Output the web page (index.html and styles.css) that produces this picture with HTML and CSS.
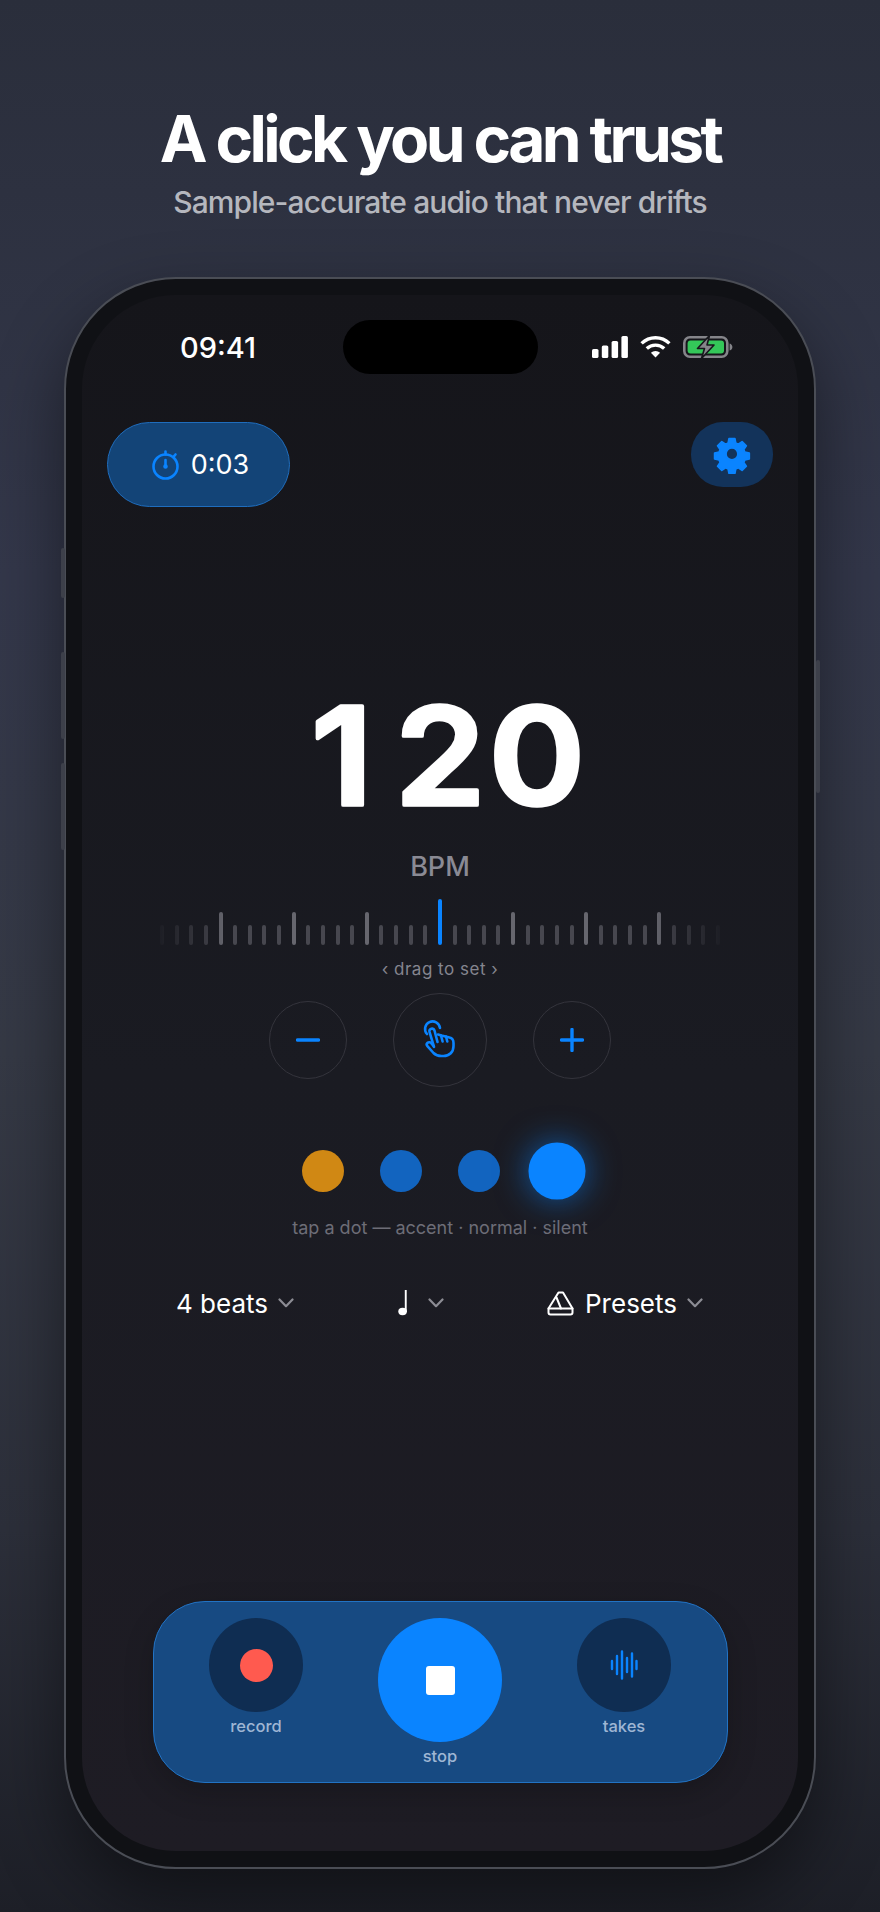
FILE: index.html
```html
<!DOCTYPE html>
<html lang="en">
  <head>
    <meta charset="utf-8" />
    <meta name="viewport" content="width=device-width, initial-scale=1.0" />
    <title>A click you can trust</title>
    <link rel="stylesheet" href="styles.css">
  </head>

  <body>
    <header class="hero">
      <h1>A click you can trust</h1>
      <p>Sample-accurate audio that never drifts</p>
    </header>

    <div class="phone">
      <span class="side side-mute"></span>
      <span class="side side-up"></span>
      <span class="side side-down"></span>
      <span class="side side-power"></span>

      <main class="screen">
        <div class="status">
          <span class="time">09:41</span>
          <span class="island"></span>
          <div class="status-icons">
            <svg width="36" height="22" viewBox="0 0 36 22" fill="#fff">
              <rect x="0" y="13" width="6.5" height="9" rx="1.6" />
              <rect x="9.8" y="9.5" width="6.5" height="12.5" rx="1.6" />
              <rect x="19.6" y="5" width="6.5" height="17" rx="1.6" />
              <rect x="29.4" y="0" width="6.5" height="22" rx="1.6" />
            </svg>
            <svg width="31" height="22" viewBox="0 0 31 22" fill="none" stroke="#fff" stroke-width="3.4">
              <path d="M1.6 7.4a20 20 0 0 1 27.8 0" />
              <path d="M6.8 12.6a12.6 12.6 0 0 1 17.4 0" />
              <path d="M15.5 21.6l-4.6-4.8a6.6 6.6 0 0 1 9.2 0z" fill="#fff" stroke="none" />
            </svg>
            <svg width="50" height="24" viewBox="0 0 50 24">
              <rect x="1.3" y="2.3" width="43" height="19.4" rx="5.6" fill="none" stroke="#85858a" stroke-width="2.6" />
              <rect x="4.6" y="5.4" width="36.4" height="13.2" rx="3" fill="#34c759" />
              <path d="M46.6 8.4c1.8.5 2.8 2 2.8 3.6s-1 3.100-2.800 3.600z" fill="#85858a" />
              <path d="M26.500 0.500 L14.500 13.500 H21.500 L18.500 23.500 L31 10 H24z" fill="#85858a" stroke="#17171c" stroke-width="1.600" stroke-linejoin="round" />
            </svg>
          </div>
        </div>

        <div class="top-bar">
          <div class="timer">
            <svg width="28" height="30" viewBox="0 0 28 30" fill="none" stroke="#0a84ff" stroke-width="2.600" stroke-linecap="round">
              <circle cx="13.500" cy="16.500" r="12" />
              <path d="M13.500 1.500v3M23.500 4.500l-1.600 1.800" />
              <path d="M13.500 10v6.500" />
              <circle cx="13.500" cy="16.500" r="1" fill="#0a84ff" />
            </svg>
            <span>0:03</span>
          </div>
          <div class="settings">
            <svg width="38" height="38" viewBox="0 0 38 38" fill="#0a84ff" stroke="#0a84ff" stroke-width="2" stroke-linejoin="round">
              <path fill-rule="evenodd" d="M15.500 1h7l1 5.200 3 1.300 4.400-3 5 5-3 4.400 1.300 3 5.200 1v7l-5.200 1-1.300 3 3 4.400-5 5-4.400-3-3 1.300-1 5.200h-7l-1-5.200-3-1.300-4.400 3-5-5 3-4.400-1.300-3-5.200-1v-7l5.200-1 1.300-3-3-4.400 5-5 4.400 3 3-1.300zM19 12a7 7 0 1 0 0 14 7 7 0 0 0 0-14z" transform="translate(2.800 1.800) scale(.85)" />
            </svg>
          </div>
        </div>

        <svg class="tempo" width="400" height="200" viewBox="0 0 400 200">
          <text transform="scale(1 .93)" x="218" y="176.900" dx="-10 22 3" text-anchor="middle">120</text>
        </svg>
        <div class="tempo-unit">BPM</div>

        <div class="ruler">
          <i class="tick"></i><i class="tick"></i><i class="tick"></i><i class="tick"></i><i class="tick tick-major"></i>
          <i class="tick"></i><i class="tick"></i><i class="tick"></i><i class="tick"></i><i class="tick tick-major"></i>
          <i class="tick"></i><i class="tick"></i><i class="tick"></i><i class="tick"></i><i class="tick tick-major"></i>
          <i class="tick"></i><i class="tick"></i><i class="tick"></i><i class="tick"></i><i class="tick tick-now"></i>
          <i class="tick"></i><i class="tick"></i><i class="tick"></i><i class="tick"></i><i class="tick tick-major"></i>
          <i class="tick"></i><i class="tick"></i><i class="tick"></i><i class="tick"></i><i class="tick tick-major"></i>
          <i class="tick"></i><i class="tick"></i><i class="tick"></i><i class="tick"></i><i class="tick tick-major"></i>
          <i class="tick"></i><i class="tick"></i><i class="tick"></i><i class="tick"></i>
        </div>
        <div class="hint">‹ drag to set ›</div>

        <div class="nudge">
          <button class="round">
            <svg width="24" height="24" viewBox="0 0 24 24" fill="none" stroke="#0a84ff" stroke-width="3.400" stroke-linecap="round"><path d="M1.500 12h21" /></svg>
          </button>
          <button class="round round-big">
            <svg width="50" height="50" viewBox="0 0 50 50" fill="none" stroke="#0a84ff" stroke-width="2.600" stroke-linecap="round" stroke-linejoin="round">
              <g transform="translate(1.500 0)">
                <path d="M10.500 19a7.500 7.500 0 1 1 13-6" />
                <path d="M21 27l-3-11.500a2.600 2.600 0 0 0-5 1.400l4.500 15" />
                <path d="M17 31l-2.500-3a2.400 2.400 0 0 0-3.600 3.200l6.100 6.800q3 3 8 3h2c6 0 10-4 10-10v-3c0-3-1.500-5-4-5.500l-8-2-3.500-1" />
                <path d="M24.500 20.500l1.600 6M29.500 21.500l1.300 5" />
              </g>
            </svg>
          </button>
          <button class="round">
            <svg width="24" height="24" viewBox="0 0 24 24" fill="none" stroke="#0a84ff" stroke-width="3.400" stroke-linecap="round"><path d="M1.500 12h21M12 1.500v21" /></svg>
          </button>
        </div>

        <div class="beats">
          <span class="dot dot-accent"></span>
          <span class="dot"></span>
          <span class="dot"></span>
          <span class="dot dot-active"></span>
        </div>
        <div class="beats-hint">tap a dot — accent · normal · silent</div>

        <div class="options">
          <div class="option">
            <span>4 beats</span>
            <svg class="chev" width="16" height="10" viewBox="0 0 16 10" fill="none" stroke="#8c8c94" stroke-width="2.200" stroke-linecap="round" stroke-linejoin="round"><path d="M1.500 1.500L8 8.200l6.500-6.700" /></svg>
          </div>
          <div class="option option-note">
            <svg width="10" height="26" viewBox="0 0 10 26" fill="#fff">
              <rect x="6.800" y="0" width="1.900" height="22" />
              <ellipse cx="4.600" cy="21.500" rx="4.300" ry="3.700" />
            </svg>
            <svg class="chev" width="16" height="10" viewBox="0 0 16 10" fill="none" stroke="#8c8c94" stroke-width="2.200" stroke-linecap="round" stroke-linejoin="round"><path d="M1.500 1.500L8 8.200l6.500-6.700" /></svg>
          </div>
          <div class="option">
            <svg width="28" height="25" viewBox="0 0 28 25" fill="none" stroke="#fff" stroke-width="2" stroke-linecap="round" stroke-linejoin="round">
              <path d="M11.500 1.500h4.500L25.500 17.500v4q0 2-2 2H3.500q-2 0-2-2v-4z" />
              <path d="M1.500 17.500h24" />
              <path d="M14 17.500L9.500 6.500" />
            </svg>
            <span>Presets</span>
            <svg class="chev" width="16" height="10" viewBox="0 0 16 10" fill="none" stroke="#8c8c94" stroke-width="2.200" stroke-linecap="round" stroke-linejoin="round"><path d="M1.500 1.500L8 8.200l6.500-6.700" /></svg>
          </div>
        </div>

        <div class="dock">
          <div class="dock-item">
            <div class="dock-btn"><span class="rec-dot"></span></div>
            <span class="dock-label">record</span>
          </div>
          <div class="dock-item">
            <div class="dock-btn dock-btn-main"><span class="stop-square"></span></div>
            <span class="dock-label">stop</span>
          </div>
          <div class="dock-item">
            <div class="dock-btn">
              <svg width="28" height="30" viewBox="0 0 28 30" fill="none" stroke="#0a84ff" stroke-width="2.400" stroke-linecap="round">
                <path d="M2 11v8M7 6v18M12 1.500v27M17 8v14M22 3.500v23M26.500 11v8" />
              </svg>
            </div>
            <span class="dock-label">takes</span>
          </div>
        </div>
      </main>
    </div>
  </body>
</html>
```

FILE: styles.css
```css
html,
body {
  margin: 0;
  height: 1912px;
}
body {
  display: flex;
  flex-direction: column;
  align-items: center;
  overflow: hidden;
  background: linear-gradient(180deg, #2a2e3b 0%, #33374a 30%, #353945 55%, #2c2f3a 80%, #1d1f27 100%);
  color: #fff;
  font-family: Inter, "Noto Sans", sans-serif;
}
button {
  padding: 0;
  background: none;
  font: inherit;
}

.hero {
  padding-top: 103px;
  text-align: center;
}
.hero h1 {
  margin: 0;
  font-size: 64px;
  line-height: 72px;
  font-weight: 700;
  letter-spacing: -0.056em;
}
.hero p {
  margin: 9px 0 0;
  font-size: 30px;
  line-height: 36px;
  font-weight: 500;
  letter-spacing: -0.03em;
  color: #b5b7be;
}

.phone {
  position: relative;
  box-sizing: border-box;
  flex: none;
  width: 752px;
  height: 1592px;
  margin-top: 57px;
  padding: 16px;
  background: #101115;
  border: 2px solid #4a4d55;
  border-radius: 112px;
  box-shadow: 0 30px 70px rgba(0, 0, 0, 0.45);
}
.side {
  position: absolute;
  width: 4px;
  background: #3d404a;
  border-radius: 2px;
}
.side-mute {
  left: -5px;
  top: 269px;
  height: 50px;
}
.side-up {
  left: -5px;
  top: 373px;
  height: 87px;
}
.side-down {
  left: -5px;
  top: 484px;
  height: 87px;
}
.side-power {
  right: -6px;
  top: 381px;
  height: 133px;
}

.screen {
  display: flex;
  flex-direction: column;
  align-items: center;
  height: 100%;
  background: linear-gradient(180deg, #15151a 0%, #1a1b22 50%, #1e1c24 100%);
  border-radius: 94px;
}

.status {
  display: grid;
  grid-template-columns: 1fr 195px 1fr;
  align-items: center;
  align-self: stretch;
  height: 54px;
  margin-top: 25px;
}
.time {
  padding-left: 98px;
  font-size: 29px;
  font-weight: 500;
}
.island {
  height: 54px;
  background: #000;
  border-radius: 27px;
}
.status-icons {
  display: flex;
  align-items: center;
  justify-content: flex-end;
  gap: 12px;
  padding-right: 65px;
}

.top-bar {
  display: flex;
  align-items: flex-start;
  justify-content: space-between;
  align-self: stretch;
  margin-top: 48px;
  padding: 0 25px;
}
.timer {
  box-sizing: border-box;
  display: flex;
  align-items: center;
  justify-content: center;
  gap: 11px;
  width: 183px;
  height: 85px;
  padding-left: 4px;
  background: #134477;
  border: 1.5px solid #1f6dbd;
  border-radius: 43px;
  font-size: 27px;
}
.settings {
  display: flex;
  align-items: center;
  justify-content: center;
  width: 82px;
  height: 65px;
  background: #13335a;
  border-radius: 32px;
}

.tempo {
  flex: none;
  margin-top: 133px;
  font-family: Inter, "Noto Sans", sans-serif;
  font-size: 146px;
  font-weight: 600;
  fill: #fff;
  stroke: #fff;
  stroke-width: 4px;
  stroke-linejoin: round;
}
.tempo-unit {
  margin-top: 10px;
  font-size: 27px;
  line-height: 34px;
  font-weight: 500;
  color: #8a8a94;
}

.ruler {
  display: flex;
  align-items: flex-end;
  justify-content: space-between;
  width: 560px;
  height: 46px;
  margin-top: 15px;
  -webkit-mask-image: linear-gradient(90deg, rgba(0, 0, 0, 0.1) 0%, #000 12%, #000 88%, rgba(0, 0, 0, 0.1) 100%);
  mask-image: linear-gradient(90deg, rgba(0, 0, 0, 0.1) 0%, #000 12%, #000 88%, rgba(0, 0, 0, 0.1) 100%);
}
.tick {
  width: 4px;
  height: 20px;
  background: #47474f;
  border-radius: 2px;
}
.tick-major {
  height: 33px;
  background: #66666e;
}
.tick-now {
  height: 46px;
  background: #0a84ff;
}

.hint {
  margin-top: 13px;
  font-size: 17px;
  line-height: 22px;
  letter-spacing: 0.03em;
  color: #85858f;
}

.nudge {
  display: flex;
  align-items: center;
  gap: 46px;
  margin-top: 13px;
}
.round {
  display: flex;
  align-items: center;
  justify-content: center;
  box-sizing: border-box;
  width: 78px;
  height: 78px;
  border: 1.5px solid #34343c;
  border-radius: 50%;
}
.round-big {
  width: 94px;
  height: 94px;
}

.beats {
  display: flex;
  align-items: center;
  gap: 36px;
  margin-top: 63px;
}
.dot {
  width: 42px;
  height: 42px;
  background: #1264bf;
  border-radius: 50%;
}
.dot-accent {
  background: #d08814;
}
.dot-active {
  background: #0a84ff;
  box-shadow: 0 0 24px rgba(10, 132, 255, 0.6);
  transform: scale(1.36);
}
.beats-hint {
  margin-top: 24px;
  font-size: 18px;
  line-height: 24px;
  color: #6d6d77;
}

.options {
  display: flex;
  align-items: center;
  justify-content: space-between;
  align-self: stretch;
  height: 40px;
  margin-top: 43px;
  padding: 0 95px 0 94px;
  font-size: 26px;
}
.option {
  display: flex;
  align-items: center;
  gap: 10px;
}
.option-note {
  gap: 20px;
}

.dock {
  box-sizing: border-box;
  display: grid;
  grid-template-columns: repeat(3, 184px);
  justify-content: center;
  width: 575px;
  height: 182px;
  margin-top: auto;
  margin-bottom: 68px;
  padding-top: 16px;
  background: #174a82;
  border: 1.5px solid #2273c4;
  border-radius: 52px;
  box-shadow: 0 10px 30px rgba(0, 0, 0, 0.2);
}
.dock-item {
  display: flex;
  flex-direction: column;
  align-items: center;
}
.dock-btn {
  display: flex;
  align-items: center;
  justify-content: center;
  width: 94px;
  height: 94px;
  background: #0f2d52;
  border-radius: 50%;
}
.dock-btn-main {
  width: 124px;
  height: 124px;
  background: #0a84ff;
}
.rec-dot {
  width: 33px;
  height: 33px;
  background: #ff5a4f;
  border-radius: 50%;
}
.stop-square {
  width: 29px;
  height: 29px;
  background: #fff;
  border-radius: 3px;
}
.dock-label {
  margin-top: 3px;
  font-size: 16.5px;
  line-height: 22px;
  font-weight: 500;
  color: #9fb6d4;
}
```
